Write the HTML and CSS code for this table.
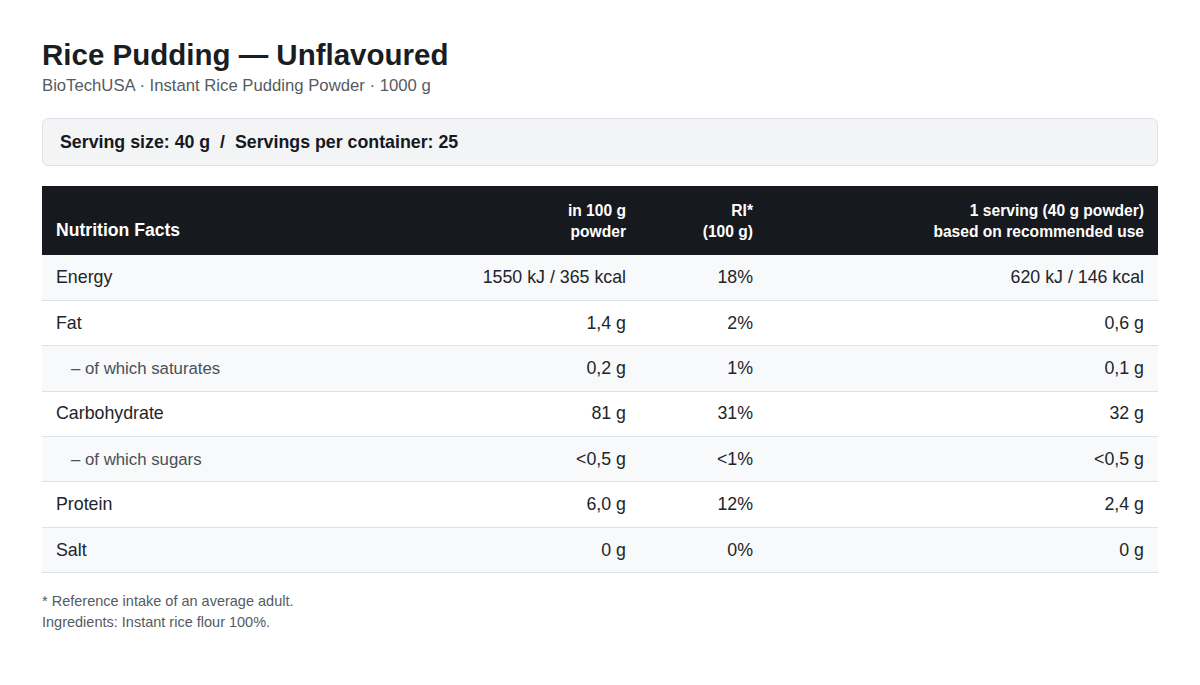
FILE: index.html
```html
<!DOCTYPE html>
<html>
<head>
<meta charset="utf-8">
<link rel="stylesheet" href="styles.css">
</head>
<body>
<main class="page">
  <h1 class="title">Rice Pudding — Unflavoured</h1>
  <p class="subtitle">BioTechUSA · Instant Rice Pudding Powder · 1000 g</p>
  <div class="serving">Serving size: 40 g &nbsp;/&nbsp; Servings per container: 25</div>
  <table class="facts">
    <colgroup>
      <col class="c1"><col class="c2"><col class="c3"><col class="c4">
    </colgroup>
    <thead>
      <tr>
        <th class="name">Nutrition Facts</th>
        <th>in 100 g<br>powder</th>
        <th>RI*<br>(100 g)</th>
        <th>1 serving (40 g powder)<br>based on recommended use</th>
      </tr>
    </thead>
    <tbody>
      <tr><td>Energy</td><td>1550 kJ / 365 kcal</td><td>18%</td><td>620 kJ / 146 kcal</td></tr>
      <tr><td>Fat</td><td>1,4 g</td><td>2%</td><td>0,6 g</td></tr>
      <tr class="sub"><td>– of which saturates</td><td>0,2 g</td><td>1%</td><td>0,1 g</td></tr>
      <tr><td>Carbohydrate</td><td>81 g</td><td>31%</td><td>32 g</td></tr>
      <tr class="sub"><td>– of which sugars</td><td>&lt;0,5 g</td><td>&lt;1%</td><td>&lt;0,5 g</td></tr>
      <tr><td>Protein</td><td>6,0 g</td><td>12%</td><td>2,4 g</td></tr>
      <tr><td>Salt</td><td>0 g</td><td>0%</td><td>0 g</td></tr>
    </tbody>
  </table>
  <div class="notes">
    <p>* Reference intake of an average adult.</p>
    <p>Ingredients: Instant rice flour 100%.</p>
  </div>
</main>
</body>
</html>
```
FILE: styles.css
```css
* { box-sizing: border-box; }
html, body { margin: 0; background: #fff; }
body {
  font-family: "Liberation Sans", Arial, sans-serif;
  color: #212529;
}
.page {
  padding: 38px 42px 0 42px;
}
.title {
  margin: 0;
  font-size: 29.5px;
  line-height: 34px;
  font-weight: 700;
  color: #1a1d21;
}
.subtitle {
  margin: 3px 0 0 0;
  font-size: 16.7px;
  line-height: 22px;
  color: #555b61;
}
.serving {
  margin-top: 21px;
  height: 48px;
  display: flex;
  align-items: center;
  padding: 0 17px;
  background: #f2f4f6;
  border: 1px solid #dee2e6;
  border-radius: 6px;
  font-size: 17.8px;
  font-weight: 700;
  color: #16191d;
}
.facts {
  margin-top: 20px;
  width: 100%;
  border-collapse: collapse;
  table-layout: fixed;
}
.c1 { width: 418px; }
.c2 { width: 180px; }
.c3 { width: 127px; }
.c4 { width: auto; }
.facts th {
  background: #16191d;
  color: #fff;
  font-size: 15.6px;
  line-height: 21px;
  font-weight: 700;
  text-align: right;
  vertical-align: bottom;
  padding: 14px 14px 13px 14px;
  height: 69px;
}
.facts th.name {
  text-align: left;
  font-size: 17.6px;
  padding-bottom: 14px;
}
.facts td {
  font-size: 17.8px;
  line-height: 20px;
  height: 45.4px;
  padding: 11px 14px 12px 14px;
  text-align: right;
  border-bottom: 1px solid #dee2e6;
  color: #212529;
}
.facts td:first-child { text-align: left; }
.facts tbody tr:nth-child(odd) td { background: #f8f9fa; }
.facts tr.sub td:first-child {
  padding-left: 29px;
  padding-top: 12px;
  padding-bottom: 11px;
  color: #495057;
  font-size: 16.8px;
}
.notes {
  margin-top: 18px;
  font-size: 14.5px;
  line-height: 21px;
  color: #555b61;
}
.notes p { margin: 0; }
```
